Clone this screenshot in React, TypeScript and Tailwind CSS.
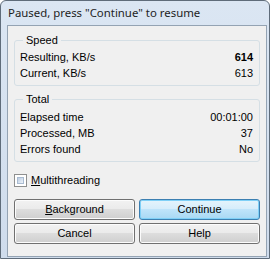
import { ReactNode } from 'react';

const rowClass = 'flex h-[16px] items-center justify-between';

function Row({ label, value, bold }: { label: string; value: string; bold?: boolean }) {
  return (
    <div className={rowClass}>
      <span>{label}</span>
      <span className={bold ? 'font-bold' : ''}>{value}</span>
    </div>
  );
}

function Group({ title, children, className = '' }: { title: string; children: ReactNode; className?: string }) {
  return (
    <fieldset className={`rounded-[3px] border border-[#d5dfe5] pl-[5px] pr-[6px] pb-[4px] ${className}`}>
      <legend className="ml-[3px] h-[13px] px-[3px] leading-[13px]">{title}</legend>
      {children}
    </fieldset>
  );
}

function Button({ children, primary }: { children: ReactNode; primary?: boolean }) {
  return (
    <button
      className={`h-[21px] rounded-[3px] border leading-[19px] ${
        primary
          ? 'border-[#3c7fb1] bg-[linear-gradient(#e5f4fc_0%,#d6edfb_45%,#bfe4fa_50%,#a8d8f4_100%)] shadow-[inset_0_0_0_1px_#7fd0f7]'
          : 'border-[#707070] bg-[linear-gradient(#f2f2f2_0%,#ebebeb_45%,#dddddd_50%,#cfcfcf_100%)] shadow-[inset_0_0_0_1px_#fcfcfc]'
      }`}
    >
      {children}
    </button>
  );
}

export default function App() {
  return (
    <div className="h-[259px] w-[271px] bg-white font-['Liberation_Sans',Arial,sans-serif] text-[11px] text-black">
      <div className="flex h-[259px] w-[270px] flex-col rounded-t-[6px] border border-[#5f6c7a] bg-[linear-gradient(#dbe6f3,#cfdcec)] pl-[6px] pr-[2px] pb-[1px]">
        <div className="flex h-[24px] items-center pl-[1px] font-['Noto_Sans',sans-serif] text-[11.4px] text-[#1e1e1e]">
          Paused, press "Continue" to resume
        </div>
        <div className="flex flex-1 flex-col border border-[#94a3b3] bg-[#f0f0f0] px-[6px] pt-[8px]">
          <Group title="Speed">
            <div className="pt-[2px]">
              <Row label="Resulting, KB/s" value="614" bold />
              <Row label="Current, KB/s" value="613" />
            </div>
          </Group>
          <Group title="Total" className="mt-[7px]">
            <div className="pt-[3px]">
              <Row label="Elapsed time" value="00:01:00" />
              <Row label="Processed, MB" value="37" />
              <Row label="Errors found" value="No" />
            </div>
          </Group>
          <label className="mt-[12px] flex h-[13px] items-center gap-[4px]">
            <span className="h-[13px] w-[13px] border border-[#8e8f8f] bg-white p-[2px]">
              <span className="block h-full w-full border border-[#a9bbd1] bg-[linear-gradient(135deg,#bccde3,#eef3f9)]" />
            </span>
            <span>
              <span className="underline">M</span>ultithreading
            </span>
          </label>
          <div className="mt-[12px] grid grid-cols-2 gap-x-[4px] gap-y-[3px]">
            <Button>
              <span className="underline">B</span>ackground
            </Button>
            <Button primary>Continue</Button>
            <Button>Cancel</Button>
            <Button>Help</Button>
          </div>
        </div>
      </div>
    </div>
  );
}
